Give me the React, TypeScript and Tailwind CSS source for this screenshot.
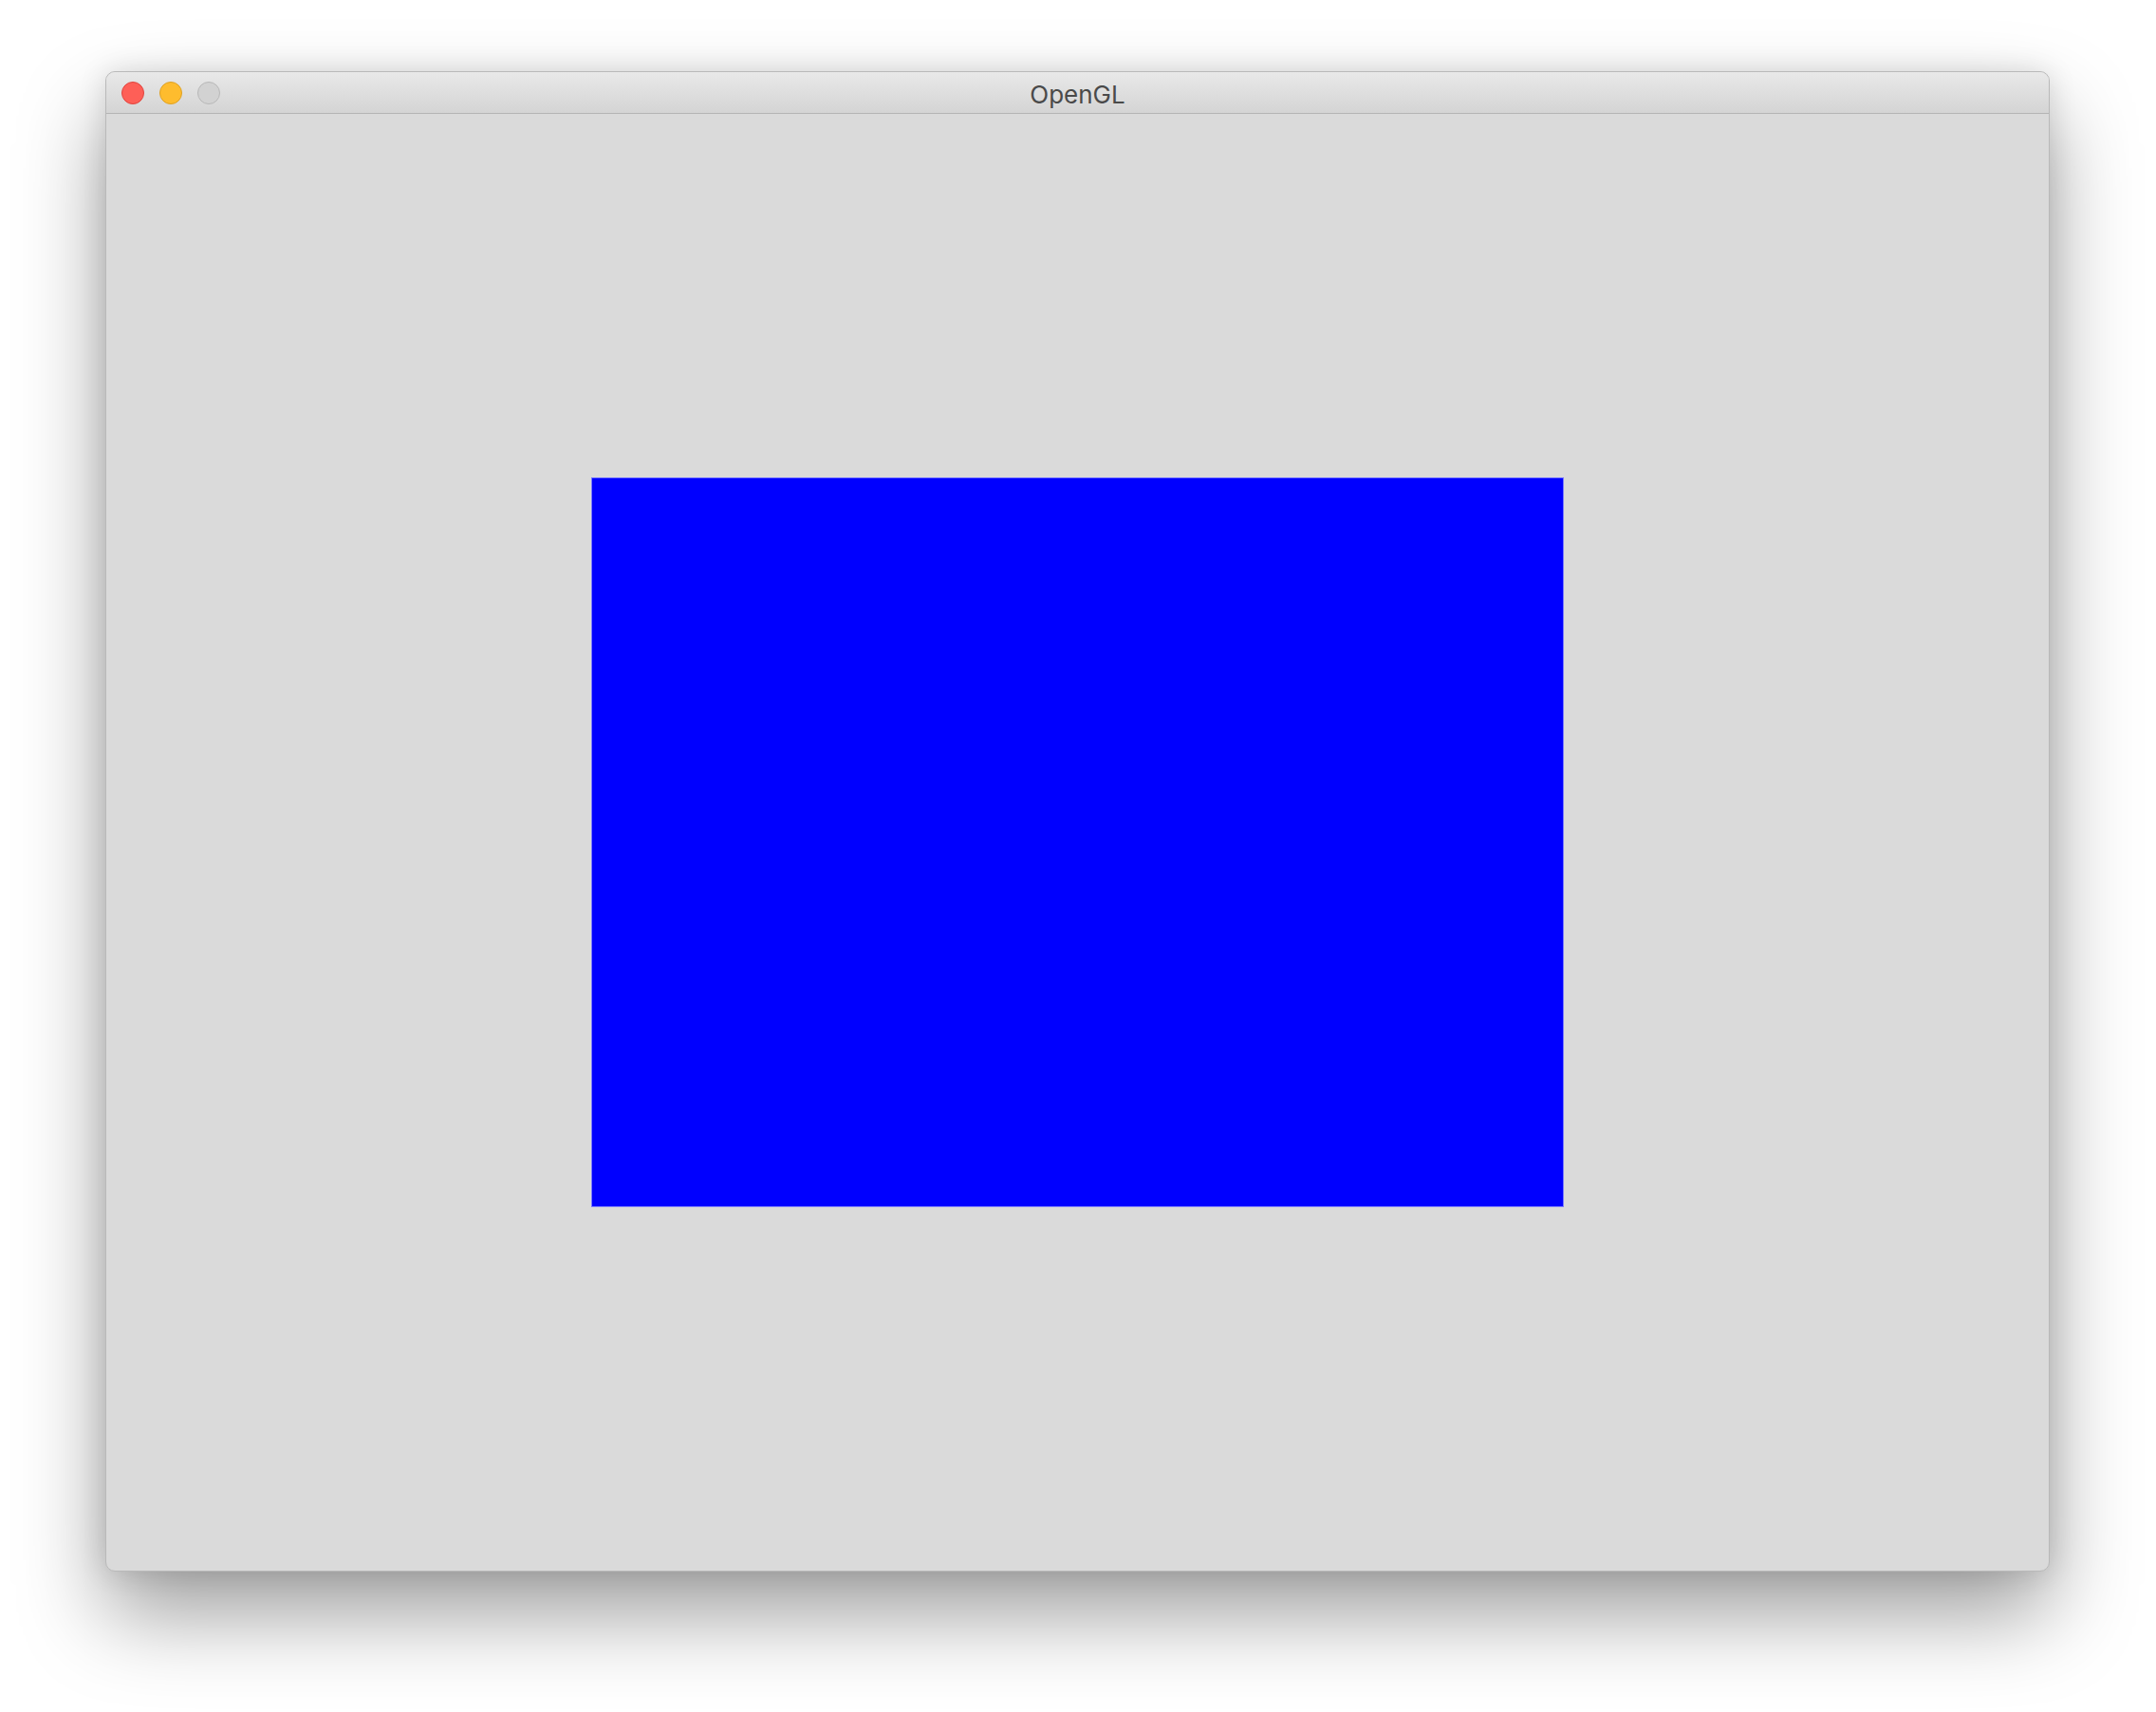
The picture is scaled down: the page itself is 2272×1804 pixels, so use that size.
import React from 'react'

const TrafficLight = ({ fill, ring }: { fill: string; ring: string }) => (
  <span className={`block size-[24px] rounded-full border ${fill} ${ring}`} />
)

export default function App() {
  return (
    <div className="h-[1804px] w-[2272px] bg-white pl-[111px] pt-[75px]">
      {/* window */}
      <div className="flex h-[1581px] w-[2049px] flex-col overflow-hidden rounded-[10px] border border-[#b9b9b9] bg-[#dadada] shadow-[0_45px_90px_rgba(0,0,0,0.38),0_0_30px_rgba(0,0,0,0.12)]">
        {/* title bar */}
        <div className="relative flex h-[44px] shrink-0 items-center border-b border-[#b4b4b4] bg-gradient-to-b from-[#e9e9e9] to-[#d4d4d4] pl-[16px]">
          <div className="flex items-center gap-[16px]">
            <TrafficLight fill="bg-[#fe5f57]" ring="border-[#e0443e]" />
            <TrafficLight fill="bg-[#febc2e]" ring="border-[#dea123]" />
            <TrafficLight fill="bg-[#d2d2d2]" ring="border-[#b8b8b8]" />
          </div>
          <div className="absolute inset-0 flex items-center justify-center pt-[3px] text-[26px] text-[#4a4a4a] [font-family:Inter,'Noto_Sans',sans-serif]">
            OpenGL
          </div>
        </div>
        {/* gl viewport */}
        <div className="flex flex-1 items-center justify-center">
          <div className="h-[769px] w-[1025px] border border-[#7a7aff] bg-[#0000ff]" />
        </div>
      </div>
    </div>
  )
}
